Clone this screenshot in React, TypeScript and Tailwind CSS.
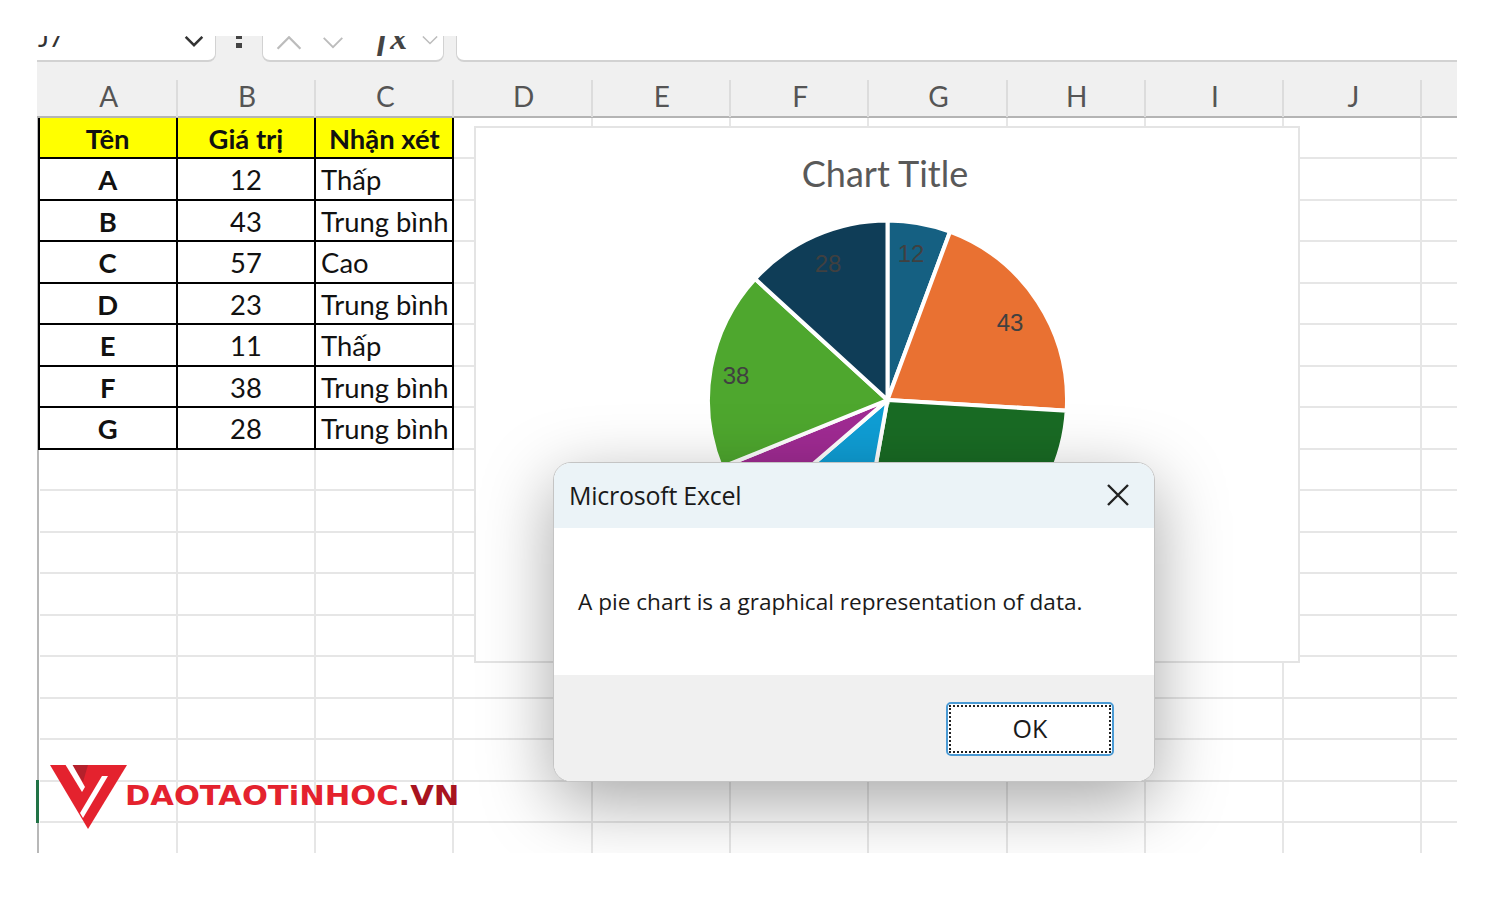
import React from "react";

const COLS = ["A", "B", "C", "D", "E", "F", "G", "H", "I", "J"];

const ROWS = [
  ["Tên", "Giá trị", "Nhận xét"],
  ["A", "12", "Thấp"],
  ["B", "43", "Trung bình"],
  ["C", "57", "Cao"],
  ["D", "23", "Trung bình"],
  ["E", "11", "Thấp"],
  ["F", "38", "Trung bình"],
  ["G", "28", "Trung bình"],
];

const SLICES = [
  { value: 12, color: "#156082" },
  { value: 43, color: "#E97132" },
  { value: 57, color: "#196B24" },
  { value: 23, color: "#0F9ED5" },
  { value: 11, color: "#A02B93" },
  { value: 38, color: "#4EA72E" },
  { value: 28, color: "#0F3D57" },
];

const LABELS = [
  { text: "12", x: 212, y: 47 },
  { text: "43", x: 311, y: 116 },
  { text: "38", x: 37, y: 169 },
  { text: "28", x: 129, y: 57 },
];

function slicePaths() {
  const total = SLICES.reduce((sum, s) => sum + s.value, 0);
  const cx = 188.5;
  const cy = 185;
  const r = 179.5;
  let start = 0;
  return SLICES.map((s) => {
    const end = start + (s.value / total) * Math.PI * 2;
    const x1 = cx + r * Math.sin(start);
    const y1 = cy - r * Math.cos(start);
    const x2 = cx + r * Math.sin(end);
    const y2 = cy - r * Math.cos(end);
    const large = end - start > Math.PI ? 1 : 0;
    start = end;
    return {
      color: s.color,
      d: `M${cx} ${cy}L${x1} ${y1}A${r} ${r} 0 ${large} 1 ${x2} ${y2}Z`,
    };
  });
}

function Chevron({ up, className }: { up?: boolean; className: string }) {
  return (
    <svg viewBox="0 0 24 14" fill="none" stroke="currentColor" className={className}>
      <path d={up ? "M2 12L12 2L22 12" : "M2 2L12 12L22 2"} />
    </svg>
  );
}

function FormulaBar() {
  return (
    <div className="flex h-[26px] overflow-hidden bg-[#f0f0f0]">
      <div className="flex w-[179px] justify-between rounded-br-lg border-r border-b-2 border-[#d2d2d2] bg-white pr-[11px]">
        <span className="mt-[-14px] pl-[1px] font-['Lato',sans-serif] text-[26px] leading-[30px] text-[#333]">
          J7
        </span>
        <Chevron className="mt-[-1px] h-[12px] w-[20px] stroke-[3] text-[#333]" />
      </div>
      <div className="flex w-[46px] justify-center">
        <div className="mt-[-2px] flex flex-col gap-[4px]">
          <i className="h-[5px] w-[6px] bg-[#444]" />
          <i className="h-[5px] w-[6px] bg-[#444]" />
        </div>
      </div>
      <div className="flex w-[182px] rounded-b-lg border-x border-b-2 border-[#d2d2d2] bg-white pl-[11px]">
        <Chevron up className="mt-[-1px] h-[16px] w-[30px] stroke-2 text-[#bcbcbc]" />
        <Chevron className="mt-0 ml-[17px] h-[13px] w-[24px] stroke-2 text-[#bcbcbc]" />
        <span className="mt-[-16px] ml-[32px] font-['Liberation_Serif',serif] text-[34px] leading-[36px] font-bold tracking-[2px] text-[#444] italic">
          fx
        </span>
        <Chevron className="mt-[-1px] ml-[12px] h-[10px] w-[18px] stroke-2 text-[#bcbcbc]" />
      </div>
      <div className="ml-[12px] flex-1 rounded-bl-lg border-b-2 border-l border-[#d2d2d2] bg-white" />
    </div>
  );
}

function ColumnHeader() {
  return (
    <div className="flex h-[55.5px] border-b-2 border-[#b4b4b4] bg-[#f0f0f0] pl-[2.5px]">
      {COLS.map((c) => (
        <div
          key={c}
          className="relative flex w-[138.3px] justify-center pt-[14px] font-['Lato',sans-serif] text-[28px] leading-[40px] text-[#555]"
        >
          {c}
          <i className="absolute top-[18px] right-0 h-[37px] w-[2px] bg-[#dcdcdc]" />
        </div>
      ))}
    </div>
  );
}

function SheetGrid() {
  const cells = [];
  for (let r = 0; r < 18; r++) {
    for (let c = 0; c < 11; c++) {
      const data = ROWS[r] && c < 3 ? ROWS[r][c] : null;
      if (data !== null) {
        const head = r === 0;
        const align = c === 2 && !head ? "justify-start pl-[5px]" : "justify-center";
        const weight = head || c === 0 ? "font-bold" : "font-normal";
        cells.push(
          <div
            key={`${r}-${c}`}
            className={`flex items-center border-r-2 border-b-2 border-black pt-[2px] text-[27.4px] whitespace-nowrap text-[#111] ${align} ${weight} ${head ? "bg-[#ffff00]" : "bg-white"} ${c === 0 ? "shadow-[-2px_0_0_#000]" : ""}`}
          >
            {data}
          </div>
        );
      } else {
        cells.push(
          <div
            key={`${r}-${c}`}
            className={`border-b-2 border-[#e6e6e6] ${c < 10 ? "border-r-2" : ""}`}
          />
        );
      }
    }
  }
  return (
    <div className="grid grid-cols-[repeat(10,138.3px)_36px] auto-rows-[41.5px] pl-[0.5px] font-['Lato',sans-serif]">
      {cells}
    </div>
  );
}

function ChartBox() {
  return (
    <div className="absolute top-[8.5px] left-[435px] flex h-[537px] w-[826px] flex-col items-center border-2 border-[#e4e4e4] bg-white">
      <div className="h-[87px] pt-[20.5px] pr-[4px] font-['Lato',sans-serif] text-[36px] leading-[48px] text-[#595959]">
        Chart Title
      </div>
      <svg width="376" height="368" viewBox="0 0 376 368">
        {slicePaths().map((p) => (
          <path key={p.color} d={p.d} fill={p.color} stroke="#fff" strokeWidth="4" />
        ))}
        {LABELS.map((l) => (
          <text
            key={l.text}
            x={l.x}
            y={l.y}
            textAnchor="middle"
            fontFamily="Liberation Sans, sans-serif"
            fontSize="24"
            fill="#404040"
          >
            {l.text}
          </text>
        ))}
      </svg>
    </div>
  );
}

function MessageBox() {
  return (
    <div className="absolute top-[344.5px] left-[514px] flex h-[320px] w-[602px] flex-col overflow-hidden rounded-[18px] border border-[#c4c4c4] bg-white font-['Open_Sans',sans-serif] shadow-[0_20px_70px_rgba(0,0,0,0.35)]">
      <div className="flex h-[65px] items-center justify-between bg-[#ebf3f7] pr-[24px] pl-[15px]">
        <span className="text-[25px] tracking-[-0.25px] text-[#1a1a1a]">Microsoft Excel</span>
        <svg width="24" height="24" viewBox="0 0 24 24" stroke="#222" strokeWidth="2.4" className="mb-[2px]">
          <path d="M2 2L22 22M22 2L2 22" />
        </svg>
      </div>
      <div className="flex h-[147px] items-center pl-[24px] text-[22.6px] text-[#1a1a1a]">
        A pie chart is a graphical representation of data.
      </div>
      <div className="flex flex-1 items-start justify-end bg-[#f0f0f0] pt-[27px] pr-[40px]">
        <button className="flex h-[54px] w-[168px] items-center justify-center rounded-[5px] border-2 border-[#4a9ad4] bg-white p-[1px]">
          <span className="flex h-full w-full items-center justify-center border-2 border-dotted border-[#222] text-[25px] text-[#1a1a1a]">
            OK
          </span>
        </button>
      </div>
    </div>
  );
}

function Watermark() {
  return (
    <div className="absolute top-[764px] left-[50px] flex items-start">
      <svg width="78" height="66" viewBox="0 0 78 66">
        <polygon points="0,1 77,1 38,65" fill="#e4222e" />
        <polygon points="22,1 38,1 33,18" fill="#b5202b" />
        <polygon points="15,0 22,0 35,23 32,28" fill="#fff" />
        <polygon points="52,12 58,12 33,54 30,49" fill="#fff" />
      </svg>
      <span className="mt-[15px] ml-[-3px] origin-left scale-x-[1.13] font-['DejaVu_Sans',sans-serif] text-[27px] leading-[34px] font-bold text-[#e4222e]">
        DAOTAOTiNHOC<span className="text-[#a8141f]">.VN</span>
      </span>
    </div>
  );
}

export default function App() {
  return (
    <div className="relative h-[900px] w-[1500px] overflow-hidden bg-white pt-[36px] pl-[37px]">
      <div className="h-[817px] w-[1420px] overflow-hidden">
        <FormulaBar />
        <ColumnHeader />
        <div className="relative border-l-2 border-[#b8b8b8]">
          <SheetGrid />
          <ChartBox />
          <MessageBox />
        </div>
      </div>
      <i className="absolute top-[780px] left-[36px] h-[43px] w-[3px] bg-[#217346]" />
      <Watermark />
    </div>
  );
}
